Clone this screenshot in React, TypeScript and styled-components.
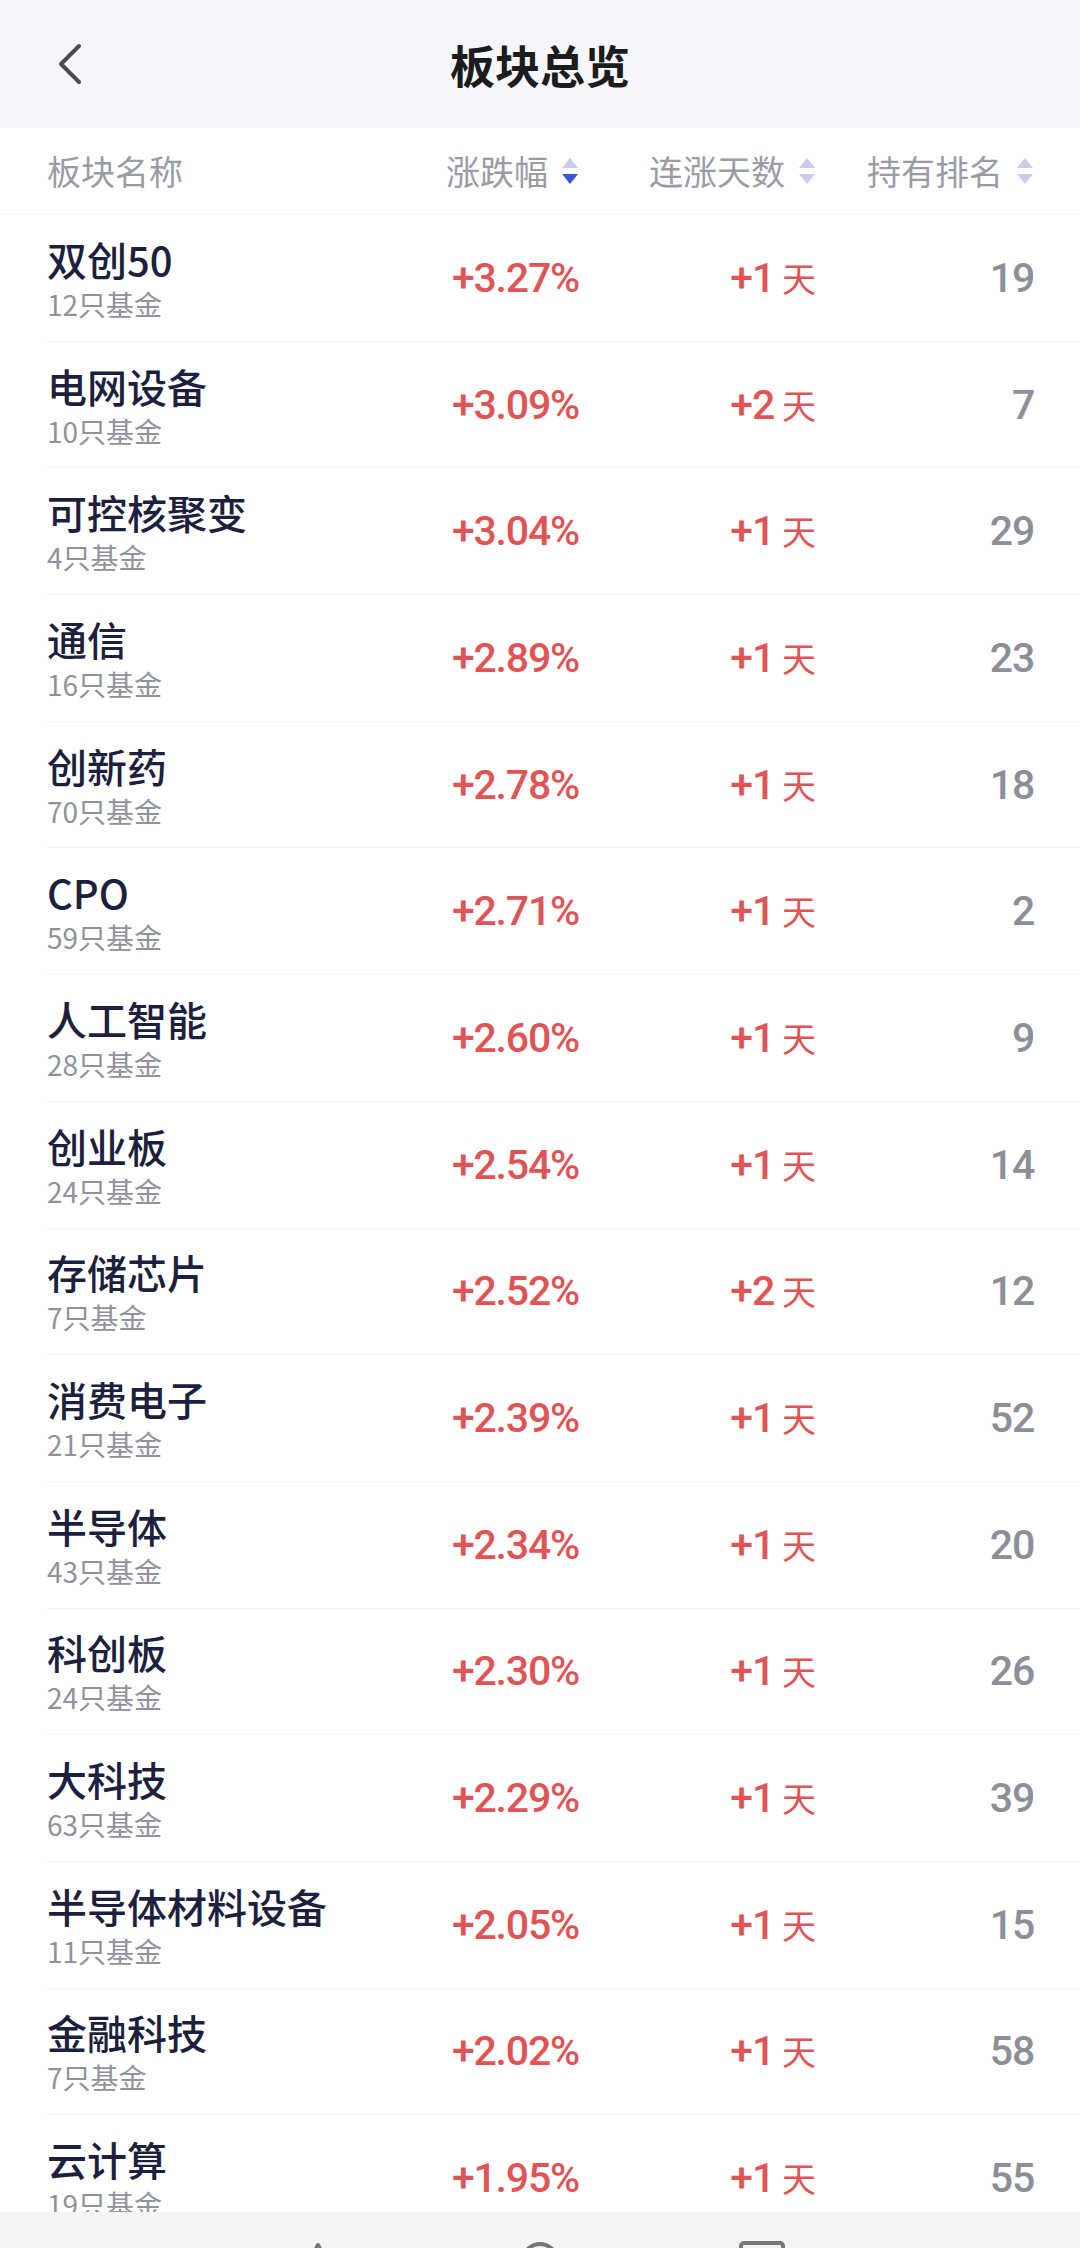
import styled, { createGlobalStyle } from "styled-components";

const GlobalStyle = createGlobalStyle`
	html, body {
		margin: 0;
		padding: 0;
		background: #ffffff;
	}
	body {
		font-family: "Noto Sans CJK SC", "Noto Sans", sans-serif;
		-webkit-font-smoothing: antialiased;
	}
	*, *::before, *::after {
		box-sizing: border-box;
	}
`;

interface Sector {
	name: string;
	funds: number;
	change: string;
	days: number;
	rank: number;
}

const sectors: Sector[] = [
	{ name: "双创50", funds: 12, change: "+3.27%", days: 1, rank: 19 },
	{ name: "电网设备", funds: 10, change: "+3.09%", days: 2, rank: 7 },
	{ name: "可控核聚变", funds: 4, change: "+3.04%", days: 1, rank: 29 },
	{ name: "通信", funds: 16, change: "+2.89%", days: 1, rank: 23 },
	{ name: "创新药", funds: 70, change: "+2.78%", days: 1, rank: 18 },
	{ name: "CPO", funds: 59, change: "+2.71%", days: 1, rank: 2 },
	{ name: "人工智能", funds: 28, change: "+2.60%", days: 1, rank: 9 },
	{ name: "创业板", funds: 24, change: "+2.54%", days: 1, rank: 14 },
	{ name: "存储芯片", funds: 7, change: "+2.52%", days: 2, rank: 12 },
	{ name: "消费电子", funds: 21, change: "+2.39%", days: 1, rank: 52 },
	{ name: "半导体", funds: 43, change: "+2.34%", days: 1, rank: 20 },
	{ name: "科创板", funds: 24, change: "+2.30%", days: 1, rank: 26 },
	{ name: "大科技", funds: 63, change: "+2.29%", days: 1, rank: 39 },
	{ name: "半导体材料设备", funds: 11, change: "+2.05%", days: 1, rank: 15 },
	{ name: "金融科技", funds: 7, change: "+2.02%", days: 1, rank: 58 },
	{ name: "云计算", funds: 19, change: "+1.95%", days: 1, rank: 55 },
];

const StyledPage = styled.div`
	display: flex;
	flex-direction: column;
	width: 1080px;
	height: 2248px;
	overflow: hidden;
	background: #ffffff;
`;

const StyledHeader = styled.header`
	position: relative;
	flex: 0 0 128px;
	display: flex;
	align-items: center;
	justify-content: center;
	background: #f6f7fa;
`;

const StyledBackButton = styled.button`
	position: absolute;
	left: 44px;
	top: 50%;
	transform: translateY(-50%);
	display: flex;
	align-items: center;
	justify-content: center;
	width: 52px;
	height: 52px;
	padding: 0;
	border: 0;
	background: transparent;
`;

const StyledTitle = styled.h1`
	margin: 0;
	font-size: 45px;
	font-weight: 700;
	color: #1c1c1f;
`;

const StyledTableGrid = styled.div`
	display: grid;
	grid-template-columns: 1fr 200px 237px 218px;
	align-items: center;
	padding: 0 46px 0 47px;
`;

const StyledColumnHeader = styled(StyledTableGrid)`
	flex: 0 0 87px;
	border-bottom: 1px solid #f0f1f4;
	color: #9a9ca5;
	font-size: 34px;
`;

const StyledHeadCell = styled.div<{ $align?: "left" | "right" }>`
	display: flex;
	align-items: center;
	justify-content: ${({ $align }) =>
		$align === "left" ? "flex-start" : "flex-end"};
	gap: 13px;
	line-height: 40px;
`;

const StyledList = styled.div`
	flex: 1;
	min-height: 0;
	overflow: hidden;
`;

const StyledRow = styled(StyledTableGrid)`
	position: relative;
	height: 126.7px;
	border-bottom: 1px solid transparent;

	&::after {
		content: "";
		position: absolute;
		left: 47px;
		right: 0;
		bottom: -1px;
		height: 1px;
		background: #f1f2f5;
	}
`;

const StyledNameCell = styled.div`
	display: flex;
	flex-direction: column;
`;

const StyledName = styled.span`
	font-size: 40px;
	line-height: 48px;
	font-weight: 500;
	color: #1c1f3d;
`;

const StyledFunds = styled.span`
	margin-top: 4px;
	font-size: 28px;
	line-height: 34px;
	color: #8f929b;
`;

const StyledValue = styled.div<{ $tone: "rise" | "muted" }>`
	text-align: right;
	font-family: Roboto, "Noto Sans CJK SC", sans-serif;
	font-size: 41px;
	font-weight: 500;
	letter-spacing: -1.2px;
	line-height: 48px;
	color: ${({ $tone }) => ($tone === "rise" ? "#e05456" : "#8c8e98")};
`;

const StyledDayUnit = styled.span`
	margin-left: 8px;
	font-family: "Noto Sans CJK SC", sans-serif;
	font-size: 34px;
	font-weight: 400;
	letter-spacing: 0;
`;

const StyledNavBar = styled.div`
	flex: 0 0 36px;
	height: 36px;
	display: flex;
	align-items: flex-start;
	justify-content: center;
	padding-top: 29px;
	background: #f4f4f6;
	overflow: hidden;
`;

const StyledNavSlot = styled.div`
	display: flex;
	justify-content: center;
	width: 222px;
	flex: 0 0 auto;
`;

const BackIcon = () => (
	<svg width="30" height="46" viewBox="0 0 30 46" fill="none">
		<path
			d="M24 5 L6 23 L24 41"
			stroke="#4a4c55"
			strokeWidth="4"
			strokeLinecap="round"
			strokeLinejoin="round"
		/>
	</svg>
);

const SortIcon = ({ active }: { active?: "asc" | "desc" }) => (
	<svg width="18" height="30" viewBox="0 0 18 30">
		<path
			d="M9 2 L17 12 L1 12 Z"
			fill={active === "asc" ? "#3b58d6" : "#c9cce8"}
		/>
		<path
			d="M1 18 L17 18 L9 28 Z"
			fill={active === "desc" ? "#3b58d6" : "#c9cce8"}
		/>
	</svg>
);

export default function App() {
	return (
		<>
			<GlobalStyle />
			<StyledPage>
				<StyledHeader>
					<StyledBackButton aria-label="返回">
						<BackIcon />
					</StyledBackButton>
					<StyledTitle>板块总览</StyledTitle>
				</StyledHeader>

				<StyledColumnHeader>
					<StyledHeadCell $align="left">板块名称</StyledHeadCell>
					<StyledHeadCell>
						涨跌幅
						<SortIcon active="desc" />
					</StyledHeadCell>
					<StyledHeadCell>
						连涨天数
						<SortIcon />
					</StyledHeadCell>
					<StyledHeadCell>
						持有排名
						<SortIcon />
					</StyledHeadCell>
				</StyledColumnHeader>

				<StyledList>
					{sectors.map((sector) => (
						<StyledRow key={sector.name}>
							<StyledNameCell>
								<StyledName>{sector.name}</StyledName>
								<StyledFunds>{sector.funds}只基金</StyledFunds>
							</StyledNameCell>
							<StyledValue $tone="rise">{sector.change}</StyledValue>
							<StyledValue $tone="rise">
								+{sector.days}
								<StyledDayUnit>天</StyledDayUnit>
							</StyledValue>
							<StyledValue $tone="muted">{sector.rank}</StyledValue>
						</StyledRow>
					))}
				</StyledList>

				<StyledNavBar>
					<StyledNavSlot>
						<svg width="40" height="40" viewBox="0 0 40 40">
							<path d="M20 4 L36 36 L4 36 Z" fill="none" stroke="#777" strokeWidth="4" strokeLinejoin="round" />
						</svg>
					</StyledNavSlot>
					<StyledNavSlot>
						<svg width="40" height="40" viewBox="0 0 40 40">
							<circle cx="20" cy="20" r="17" fill="none" stroke="#777" strokeWidth="4" />
						</svg>
					</StyledNavSlot>
					<StyledNavSlot>
						<svg width="46" height="40" viewBox="0 0 46 40">
							<rect x="2" y="2" width="42" height="36" rx="3" fill="none" stroke="#777" strokeWidth="4" />
						</svg>
					</StyledNavSlot>
				</StyledNavBar>
			</StyledPage>
		</>
	);
}
